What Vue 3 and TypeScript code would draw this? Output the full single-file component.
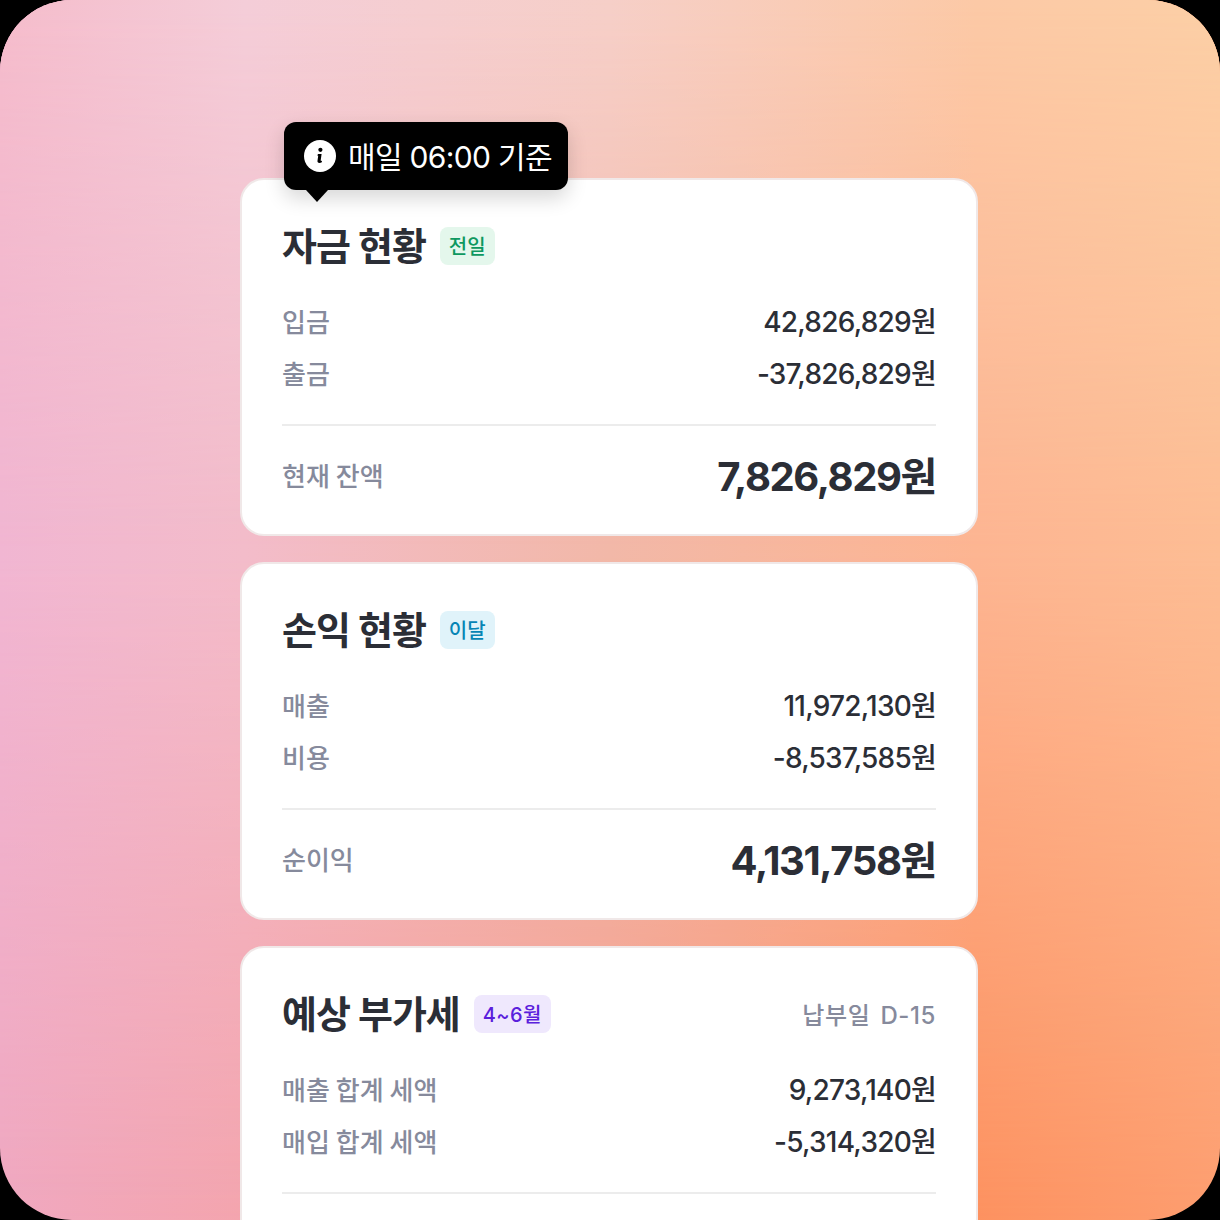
<script setup lang="ts">
interface Row {
  label: string
  value: string
}

interface Card {
  title: string
  badge: string
  tone: string
  due?: string
  rows: Row[]
  totalLabel?: string
  total?: string
}

const cards: Card[] = [
  {
    title: '자금 현황',
    badge: '전일',
    tone: 'green',
    rows: [
      { label: '입금', value: '42,826,829원' },
      { label: '출금', value: '-37,826,829원' }
    ],
    totalLabel: '현재 잔액',
    total: '7,826,829원'
  },
  {
    title: '손익 현황',
    badge: '이달',
    tone: 'blue',
    rows: [
      { label: '매출', value: '11,972,130원' },
      { label: '비용', value: '-8,537,585원' }
    ],
    totalLabel: '순이익',
    total: '4,131,758원'
  },
  {
    title: '예상 부가세',
    badge: '4~6월',
    tone: 'purple',
    due: '납부일  D-15',
    rows: [
      { label: '매출 합계 세액', value: '9,273,140원' },
      { label: '매입 합계 세액', value: '-5,314,320원' }
    ]
  }
]
</script>

<template>
  <div class="frame">
    <div class="screen">
      <div class="wash wash-mid"></div>
      <div class="wash wash-top"></div>
      <div class="stack">
        <section v-for="(card, i) in cards" :key="card.title" class="card">
          <div v-if="i === 0" class="tooltip">
            <svg class="info" viewBox="0 0 32 32" width="32" height="32">
              <circle cx="16" cy="16" r="16" fill="#fff" />
              <circle cx="16.4" cy="9.8" r="2.1" fill="#000" />
              <path d="M14 14h3.6l-.9 6.2c-.1.7.4.9 1.3.6l-.2 1.5c-.8.4-1.6.6-2.4.6-1.4 0-2.1-.8-1.9-2.2l.7-4.9-.9-.4z" fill="#000" />
            </svg>
            <span class="tip-text">매일 06:00 기준</span>
          </div>
          <header class="head">
            <h2>{{ card.title }}</h2>
            <span class="badge" :class="card.tone">{{ card.badge }}</span>
            <span v-if="card.due" class="due">{{ card.due }}</span>
          </header>
          <div class="rows">
            <div v-for="row in card.rows" :key="row.label" class="row">
              <span class="label">{{ row.label }}</span>
              <span class="value">{{ row.value }}</span>
            </div>
          </div>
          <hr class="line" />
          <div v-if="card.total" class="total">
            <span class="label">{{ card.totalLabel }}</span>
            <strong>{{ card.total }}</strong>
          </div>
        </section>
      </div>
    </div>
  </div>
</template>

<style>
html, body { margin: 0; background: #000; }
</style>

<style scoped>
.frame {
  width: 1220px;
  height: 1220px;
  background: #000;
  overflow: hidden;
  font-family: Inter, "Noto Sans CJK KR", sans-serif;
}

.screen {
  position: relative;
  height: 1220px;
  box-sizing: border-box;
  padding: 178px 242px 0 240px;
  border-radius: 72px;
  overflow: hidden;
  background: linear-gradient(90deg, #f0a8c0 0%, #f4a5ae 20%, #f4a090 50%, #fd9260 80%, #fd9e70 100%);
}

.wash {
  position: absolute;
  inset: 0;
}

.wash-mid {
  background: linear-gradient(90deg, #f1b6d2 0%, #f3bcca 20%, #f2b8a8 50%, #fdb592 80%, #fdbd94 100%);
  -webkit-mask-image: linear-gradient(to top, transparent 0%, #000 55%);
  mask-image: linear-gradient(to top, transparent 0%, #000 55%);
}

.wash-top {
  background: linear-gradient(90deg, #f5bccb 0%, #f4cdd8 20%, #f6cfc8 50%, #fcc9a6 80%, #fccfa6 100%);
  -webkit-mask-image: linear-gradient(to bottom, #000 0%, transparent 45%);
  mask-image: linear-gradient(to bottom, #000 0%, transparent 45%);
}

.stack {
  position: relative;
  display: flex;
  flex-direction: column;
  gap: 26px;
}

.card {
  position: relative;
  box-sizing: border-box;
  height: 358px;
  padding: 40px 40px 0;
  background: #fff;
  border: 2px solid #f0e8e8;
  border-radius: 24px;
  flex: none;
}

.tooltip {
  position: absolute;
  left: 42px;
  top: -58px;
  height: 68px;
  display: flex;
  align-items: center;
  gap: 12px;
  padding: 0 16px 0 20px;
  background: #000;
  color: #fff;
  border-radius: 12px;
  font-size: 30px;
  letter-spacing: -0.68px;
  white-space: nowrap;
  box-shadow: 0 8px 20px rgba(0, 0, 0, 0.16);
}

.tip-text { margin-top: -2px; }

.tooltip::after {
  content: '';
  position: absolute;
  left: 22px;
  bottom: -12px;
  width: 22px;
  height: 12px;
  background: #000;
  clip-path: polygon(0 0, 100% 0, 50% 100%);
}

.info { flex: none; }

.head {
  display: flex;
  align-items: center;
  gap: 14px;
  height: 52px;
}

h2 {
  margin: 0;
  font-size: 38px;
  line-height: 52px;
  font-weight: 700;
  letter-spacing: -1px;
  color: #2b2e36;
}

.badge {
  display: flex;
  align-items: center;
  height: 38px;
  padding: 0 9px 2px;
  box-sizing: border-box;
  border-radius: 8px;
  font-size: 20px;
  font-weight: 500;
}

.green { background: #e4f7ec; color: #0e9860; }
.blue { background: #e0f3fa; color: #0685b5; }
.purple { background: #efe8fd; color: #5a20dc; letter-spacing: 0.4px; }

.due {
  margin: -2px 0 0 auto;
  font-size: 24px;
  font-weight: 500;
  letter-spacing: 0.6px;
  word-spacing: -2px;
  color: #868a9c;
  white-space: pre;
}

.rows {
  margin-top: 30px;
  display: flex;
  flex-direction: column;
  gap: 16px;
}

.row, .total {
  display: flex;
  justify-content: space-between;
  align-items: center;
}

.row { height: 36px; }

.label {
  font-size: 26px;
  font-weight: 500;
  word-spacing: -1px;
  color: #868a9c;
}

.value {
  font-size: 28px;
  font-weight: 450;
  letter-spacing: -0.76px;
  color: #2b2e36;
}

.line {
  margin: 34px 0 0;
  border: 0;
  height: 2px;
  background: #ececec;
}

.total {
  height: 96px;
}

.total strong {
  font-size: 40px;
  font-weight: 700;
  letter-spacing: -1.4px;
  color: #2b2e36;
}
</style>
